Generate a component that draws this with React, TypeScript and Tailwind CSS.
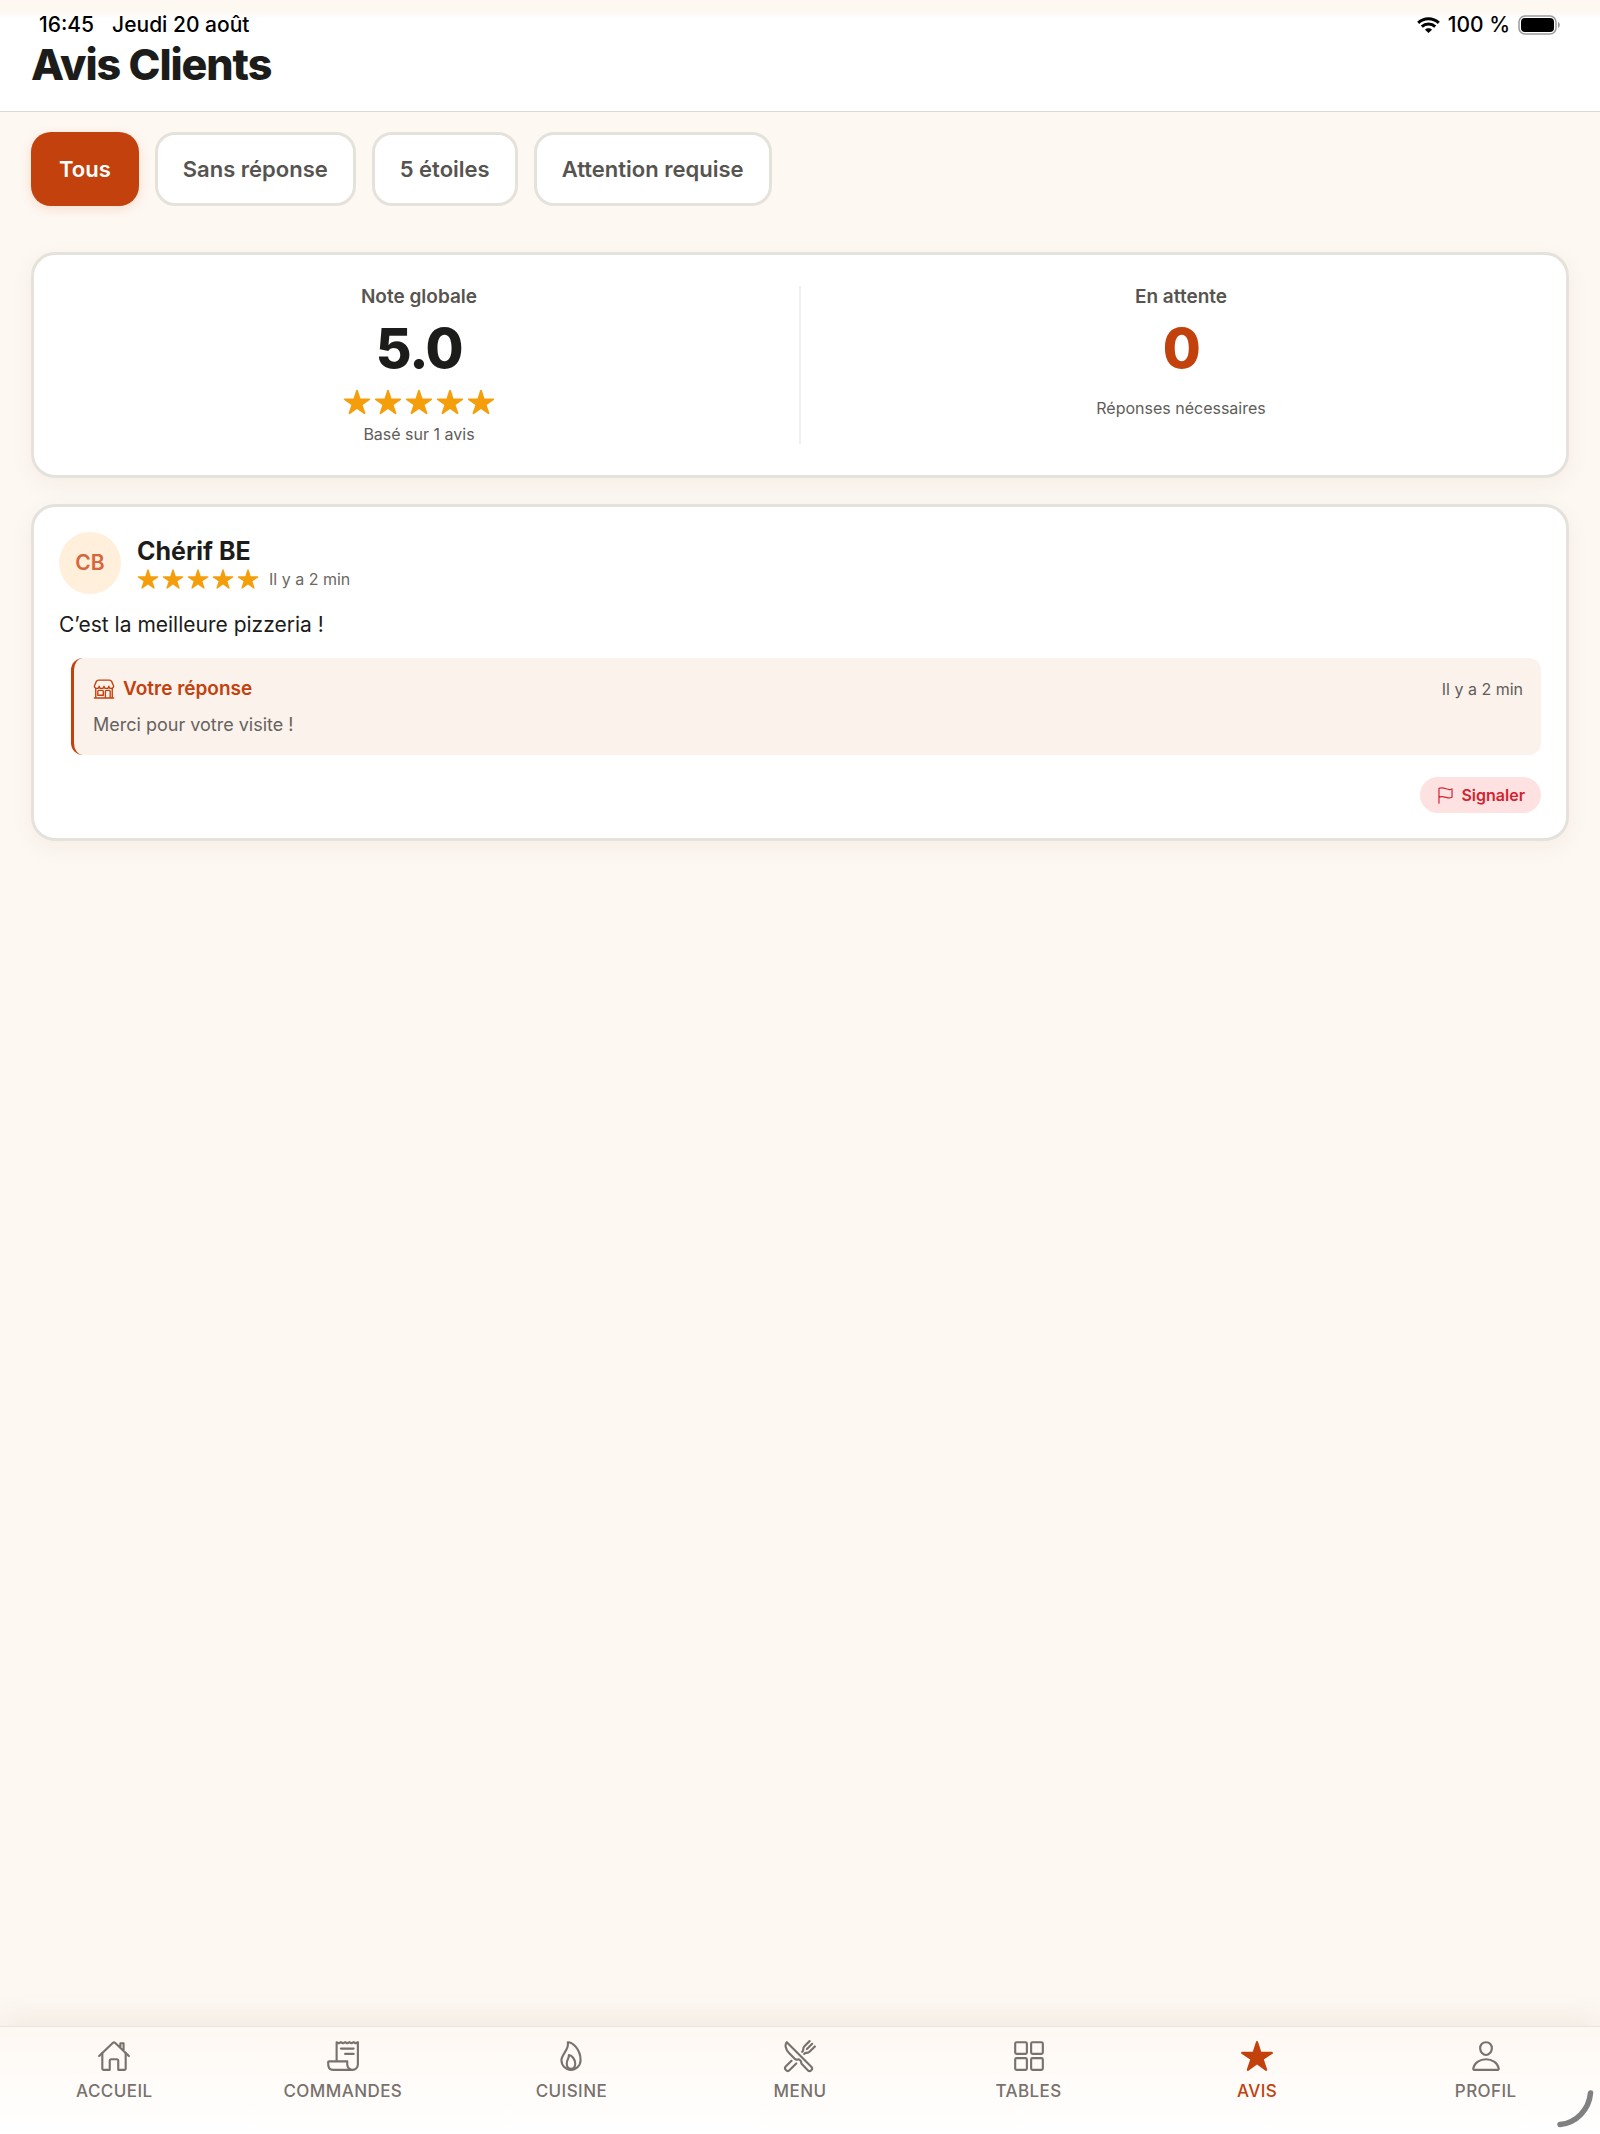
import type { ReactNode } from "react";
import {
  IoFlagOutline,
  IoFlameOutline,
  IoGridOutline,
  IoHomeOutline,
  IoPersonOutline,
  IoReceiptOutline,
  IoRestaurantOutline,
  IoStar,
  IoStorefrontOutline,
} from "react-icons/io5";

function WifiIcon() {
  return (
    <svg viewBox="0 0 23 16" className="h-4 w-[23px]" fill="none" stroke="#000" aria-hidden="true">
      <path d="M1.2 5.9C7 .4 16 .4 21.800 5.900" strokeWidth="3" />
      <path d="M4.800 9.700c3.800-3.500 9.600-3.500 13.400 0" strokeWidth="3" />
      <path d="M11.500 16 8 12.700c2-1.900 5-1.900 7 0z" fill="#000" stroke="none" />
    </svg>
  );
}

function BatteryIcon() {
  return (
    <svg viewBox="0 0 43 20" className="h-5 w-[43px]" fill="none" aria-label="Batterie pleine" role="img">
      <rect x="1" y="1" width="37" height="18" rx="6" stroke="#9a9a9a" strokeWidth="1.500" />
      <rect x="3" y="3" width="33" height="14" rx="4" fill="#000" />
      <path d="M40 7c2.400 1 2.400 5 0 6z" fill="#9a9a9a" />
    </svg>
  );
}

function Stars({ large = false }: { large?: boolean }) {
  return (
    <div className="flex gap-[3px] text-[#f59e0b]" role="img" aria-label="5 étoiles sur 5">
      {[1, 2, 3, 4, 5].map((n) => (
        <IoStar key={n} className={large ? "size-7" : "size-[22px]"} />
      ))}
    </div>
  );
}

const filters = ["Tous", "Sans réponse", "5 étoiles", "Attention requise"];

const tabs: { label: string; icon: ReactNode; active?: boolean }[] = [
  { label: "ACCUEIL", icon: <IoHomeOutline /> },
  { label: "COMMANDES", icon: <IoReceiptOutline /> },
  { label: "CUISINE", icon: <IoFlameOutline /> },
  { label: "MENU", icon: <IoRestaurantOutline /> },
  { label: "TABLES", icon: <IoGridOutline /> },
  { label: "AVIS", icon: <IoStar />, active: true },
  { label: "PROFIL", icon: <IoPersonOutline /> },
];

const card =
  "rounded-3xl border-[3px] border-[#e5e2db] bg-white shadow-[0_6px_24px_rgba(60,40,20,0.05)]";

export default function App() {
  return (
    <div className="relative flex min-h-screen flex-col bg-[#fef8f2] font-['Inter',sans-serif] text-[#1c1c1a]">
      <header className="border-b border-[#dcd9d5] bg-linear-to-b from-[#fef8f2] from-[12px] to-white to-[18px] px-[31px] pt-[13px] pb-5">
        <div className="flex h-6 items-center justify-between px-2 text-[21px] leading-6 font-medium text-black">
          <div className="flex gap-[18px]">
            <time>16:45</time>
            <span>Jeudi 20 août</span>
          </div>
          <div className="flex items-center gap-2">
            <WifiIcon />
            <span>100 %</span>
            <BatteryIcon />
          </div>
        </div>
        <h1 className="text-[43px] leading-[54px] font-extrabold tracking-tight">Avis Clients</h1>
      </header>

      <main className="flex flex-1 flex-col px-[31px] pt-5">
        <div className="flex gap-4">
          {filters.map((f, i) => (
            <button
              key={f}
              type="button"
              className={
                i === 0
                  ? "h-[74px] rounded-[20px] bg-[#c2410c] px-7 text-[22px] font-semibold text-white shadow-[0_3px_12px_rgba(194,65,12,0.15)]"
                  : "h-[74px] rounded-[20px] border-[3px] border-[#e5e2db] bg-white px-[25px] text-[22px] font-semibold text-[#565450]"
              }
            >
              {f}
            </button>
          ))}
        </div>

        <section className={`mt-[46px] flex px-[25px] py-[31px] ${card}`}>
          <div className="flex flex-1 flex-col items-center">
            <h2 className="text-[19px] leading-[22px] font-semibold text-[#57544f]">Note globale</h2>
            <p className="mt-2 text-[55px] leading-[64px] font-extrabold tracking-tight">5.0</p>
            <div className="mt-2">
              <Stars large />
            </div>
            <p className="mt-2 text-base leading-5 text-[#605d59]">Basé sur 1 avis</p>
          </div>
          <div className="mx-5 w-[2px] bg-[#efefec]" />
          <div className="flex flex-1 flex-col items-center">
            <h2 className="text-[19px] leading-[22px] font-semibold text-[#57544f]">En attente</h2>
            <p className="mt-2 text-[55px] leading-[64px] font-extrabold tracking-tight text-[#c2410c]">0</p>
            <p className="mt-[18px] text-base leading-5 text-[#605d59]">Réponses nécessaires</p>
          </div>
        </section>

        <article className={`mt-[26px] p-[25px] ${card}`}>
          <div className="flex items-center gap-4">
            <div className="flex size-[62px] items-center justify-center rounded-full bg-[#ffefdb] text-[21px] font-semibold text-[#d4673d]">
              CB
            </div>
            <div>
              <h3 className="text-[25px] leading-8 font-bold">Chérif BE</h3>
              <div className="flex items-center gap-2.5">
                <Stars />
                <time className="text-base leading-6 text-[#6b6762]">Il y a 2 min</time>
              </div>
            </div>
          </div>
          <p className="mt-[15px] text-[21px] leading-8">C’est la meilleure pizzeria !</p>
          <div className="mt-[17px] ml-3 rounded-xl border-l-[3px] border-[#c2410c] bg-[#fbf2ec] pt-[19px] pr-[18px] pb-3.5 pl-[19px]">
            <div className="flex items-center gap-2">
              <IoStorefrontOutline className="size-[22px] text-[#c2410c]" />
              <h4 className="text-[19px] leading-6 font-semibold text-[#c2410c]">Votre réponse</h4>
              <time className="ml-auto text-base leading-6 text-[#605d59]">Il y a 2 min</time>
            </div>
            <p className="mt-2 text-[18px] leading-8 text-[#66625e]">Merci pour votre visite !</p>
          </div>
          <div className="mt-[22px] flex justify-end">
            <button
              type="button"
              className="flex h-9 items-center gap-1.5 rounded-full bg-[#fee2e2] px-4 text-base font-semibold text-[#d3232f]"
            >
              <IoFlagOutline className="size-[19px]" />
              Signaler
            </button>
          </div>
        </article>
      </main>

      <nav className="grid h-[108px] grid-cols-7 border-t border-[#e9e3de] bg-linear-to-b from-[#fef8f2] to-white pt-3 shadow-[0_-6px_30px_rgba(60,40,20,0.08)]">
        {tabs.map((t) => (
          <a
            key={t.label}
            href={`#${t.label.toLowerCase()}`}
            aria-current={t.active ? "page" : undefined}
            className={
              t.active
                ? "flex flex-col items-center text-[34px] text-[#c2410c]"
                : "flex flex-col items-center text-[34px] text-[#78716c]"
            }
          >
            {t.icon}
            <span className="mt-1.5 text-[17px] leading-6 font-medium tracking-wide">{t.label}</span>
          </a>
        ))}
      </nav>

      <svg
        viewBox="0 0 40 40"
        className="absolute right-1 bottom-1 size-10"
        fill="none"
        stroke="#808080"
        strokeWidth="5.5"
        strokeLinecap="round"
        aria-hidden="true"
      >
        <path d="M34.500 3C33 20 20 33 4 34.500" />
      </svg>
    </div>
  );
}
